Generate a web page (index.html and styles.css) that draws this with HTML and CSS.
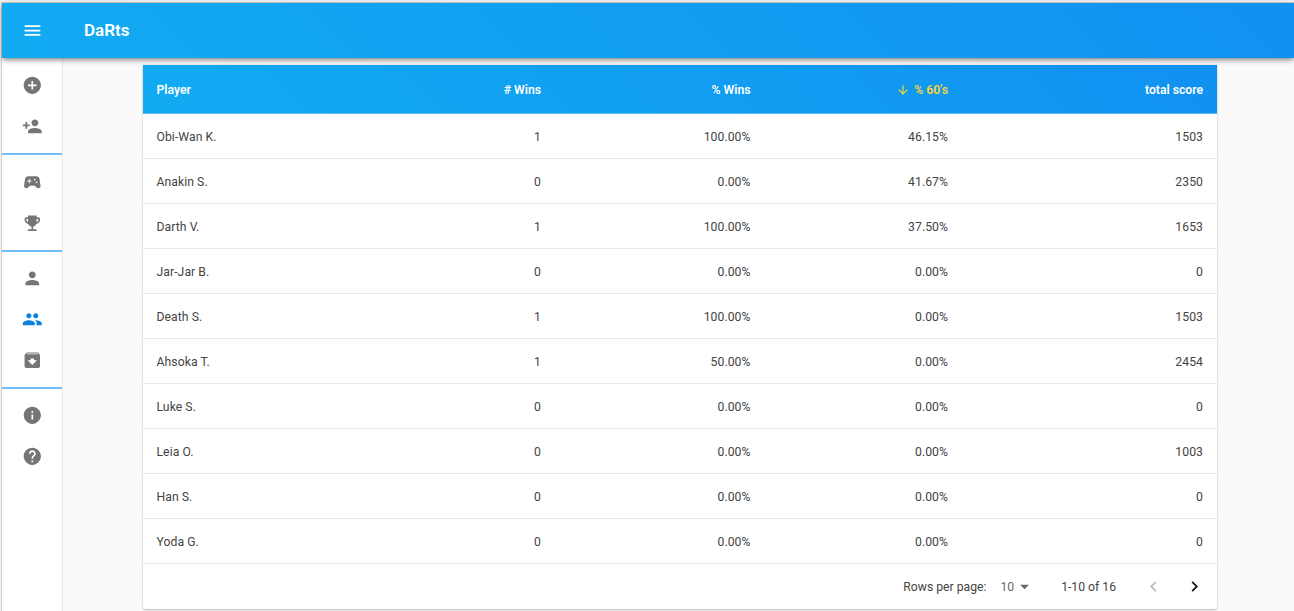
FILE: index.html
```
<!DOCTYPE html>
<html lang="en">
<head>
<meta charset="utf-8">
<title>DaRts</title>
<link rel="stylesheet" href="styles.css">
</head>
<body>
<div class="app">
  <header class="appbar">
    <svg class="menu-icon" viewBox="0 0 24 24"><path d="M3 18h18v-2H3v2zm0-5h18v-2H3v2zm0-7v2h18V6H3z"/></svg>
    <h1 class="title">DaRts</h1>
  </header>
  <div class="body">
    <nav class="sidebar">
      <div class="group">
        <a class="item"><svg viewBox="0 0 24 24"><path d="M12 2C6.48 2 2 6.48 2 12s4.48 10 10 10 10-4.480 10-10S17.520 2 12 2zm5 11h-4v4h-2v-4H7v-2h4V7h2v4h4v2z"/></svg></a>
        <a class="item"><svg viewBox="0 0 24 24"><path d="M15 12c2.210 0 4-1.790 4-4s-1.790-4-4-4-4 1.790-4 4 1.790 4 4 4zm-9-2V7H4v3H1v2h3v3h2v-3h3v-2H6zm9 4c-2.670 0-8 1.340-8 4v2h16v-2c0-2.660-5.330-4-8-4z"/></svg></a>
      </div>
      <div class="group">
        <a class="item"><svg viewBox="0 0 24 24"><path d="M21.580 16.090l-1.090-7.660C20.210 6.460 18.520 5 16.530 5H7.470C5.480 5 3.790 6.460 3.510 8.430l-1.090 7.660C2.200 17.630 3.390 19 4.940 19c.68 0 1.320-.27 1.800-.75L9 16h6l2.250 2.250c.48.48 1.130.75 1.800.75 1.560 0 2.750-1.370 2.530-2.910zM11 11H9v2H8v-2H6v-1h2V8h1v2h2v1zm4-1c-.55 0-1-.45-1-1s.45-1 1-1 1 .45 1 1-.45 1-1 1zm2 3c-.55 0-1-.45-1-1s.45-1 1-1 1 .45 1 1-.45 1-1 1z"/></svg></a>
        <a class="item"><svg viewBox="0 0 24 24"><path d="M19 5h-2V3H7v2H5c-1.100 0-2 .9-2 2v1c0 2.550 1.920 4.630 4.390 4.940.63 1.500 1.980 2.630 3.610 2.960V19H7v2h10v-2h-4v-3.100c1.630-.33 2.980-1.460 3.610-2.960C19.080 12.630 21 10.550 21 8V7c0-1.100-.9-2-2-2zM5 8V7h2v3.820C5.840 10.400 5 9.300 5 8zm14 0c0 1.300-.84 2.400-2 2.820V7h2v1z"/></svg></a>
      </div>
      <div class="group">
        <a class="item"><svg viewBox="0 0 24 24"><path d="M12 12c2.210 0 4-1.790 4-4s-1.790-4-4-4-4 1.790-4 4 1.790 4 4 4zm0 2c-2.670 0-8 1.340-8 4v2h16v-2c0-2.660-5.330-4-8-4z"/></svg></a>
        <a class="item active"><svg viewBox="0 0 24 24"><path d="M16 11c1.660 0 2.990-1.340 2.990-3S17.660 5 16 5s-3 1.340-3 3 1.340 3 3 3zm-8 0c1.660 0 2.990-1.340 2.990-3S9.660 5 8 5 5 6.340 5 8s1.340 3 3 3zm0 2c-2.330 0-7 1.170-7 3.500V19h14v-2.500c0-2.330-4.670-3.500-7-3.500zm8 0c-.29 0-.62.02-.97.05 1.160.84 1.970 1.970 1.970 3.450V19h6v-2.500c0-2.330-4.670-3.500-7-3.500z"/></svg></a>
        <a class="item"><svg viewBox="0 0 24 24"><path d="M20.540 5.230l-1.390-1.680C18.880 3.210 18.470 3 18 3H6c-.47 0-.88.21-1.160.55L3.460 5.230C3.170 5.570 3 6.020 3 6.500V19c0 1.100.9 2 2 2h14c1.100 0 2-.9 2-2V6.500c0-.48-.17-.93-.46-1.270zM12 17.500L6.500 12H10v-2h4v2h3.500L12 17.500zM5.120 5l.81-1h12l.94 1H5.120z"/></svg></a>
      </div>
      <div class="group last">
        <a class="item"><svg viewBox="0 0 24 24"><path d="M12 2C6.480 2 2 6.480 2 12s4.480 10 10 10 10-4.480 10-10S17.520 2 12 2zm1 15h-2v-6h2v6zm0-8h-2V7h2v2z"/></svg></a>
        <a class="item"><svg viewBox="0 0 24 24"><path d="M12 2C6.480 2 2 6.480 2 12s4.480 10 10 10 10-4.480 10-10S17.520 2 12 2zm1 17h-2v-2h2v2zm2.070-7.750l-.9.920C13.450 12.900 13 13.500 13 15h-2v-.5c0-1.100.45-2.100 1.170-2.830l1.240-1.260c.37-.36.59-.86.59-1.410 0-1.100-.9-2-2-2s-2 .9-2 2H8c0-2.210 1.790-4 4-4s4 1.790 4 4c0 .88-.36 1.680-.93 2.250z"/></svg></a>
      </div>
    </nav>
    <main class="content">
      <section class="card">
        <div class="row head"><span>Player</span><span># Wins</span><span>% Wins</span><span class="sorted"><svg viewBox="0 0 24 24"><path d="M20 12l-1.410-1.410L13 16.170V4h-2v12.170l-5.580-5.590L4 12l8 8 8-8z"/></svg>% 60's</span><span>total score</span></div>
        <div class="row"><span>Obi-Wan K.</span><span>1</span><span>100.00%</span><span>46.15%</span><span>1503</span></div>
        <div class="row"><span>Anakin S.</span><span>0</span><span>0.00%</span><span>41.67%</span><span>2350</span></div>
        <div class="row"><span>Darth V.</span><span>1</span><span>100.00%</span><span>37.50%</span><span>1653</span></div>
        <div class="row"><span>Jar-Jar B.</span><span>0</span><span>0.00%</span><span>0.00%</span><span>0</span></div>
        <div class="row"><span>Death S.</span><span>1</span><span>100.00%</span><span>0.00%</span><span>1503</span></div>
        <div class="row"><span>Ahsoka T.</span><span>1</span><span>50.00%</span><span>0.00%</span><span>2454</span></div>
        <div class="row"><span>Luke S.</span><span>0</span><span>0.00%</span><span>0.00%</span><span>0</span></div>
        <div class="row"><span>Leia O.</span><span>0</span><span>0.00%</span><span>0.00%</span><span>1003</span></div>
        <div class="row"><span>Han S.</span><span>0</span><span>0.00%</span><span>0.00%</span><span>0</span></div>
        <div class="row"><span>Yoda G.</span><span>0</span><span>0.00%</span><span>0.00%</span><span>0</span></div>
        <div class="pager">
          <span class="label">Rows per page:</span>
          <span class="select">10<svg viewBox="0 0 24 24"><path d="M7 10l5 5 5-5z"/></svg></span>
          <span class="range">1-10 of 16</span>
          <svg class="arrow disabled" viewBox="0 0 24 24"><path d="M15.410 7.410L14 6l-6 6 6 6 1.410-1.410L10.830 12z"/></svg>
          <svg class="arrow" viewBox="0 0 24 24"><path d="M10 6L8.590 7.410 13.170 12l-4.580 4.590L10 18l6-6z"/></svg>
        </div>
      </section>
    </main>
  </div>
</div>
</body>
</html>
```
FILE: styles.css
```
* { box-sizing: border-box; }
body {
  margin: 0;
  height: 611px;
  overflow: hidden;
  background: #f1f1f1;
  font-family: Roboto, "Liberation Sans", sans-serif;
  color: #444;
}
svg { display: block; fill: currentColor; flex: none; }
.app {
  margin-left: 1px;
  margin-top: 2px;
  height: 609px;
  display: flex;
  flex-direction: column;
  border-left: 1px solid #cfcfcf;
  border-top: 1px solid #d2cfcd;
  background: #fafafa;
}
.appbar {
  flex: none;
  height: 55px;
  padding-left: 20px;
  display: flex;
  align-items: center;
  color: #fff;
  background: linear-gradient(45deg, #12abf2 0%, #1191f1 100%);
  box-shadow: 0 2px 4px -1px rgba(0,0,0,.3), 0 3px 5px rgba(0,0,0,.16), 0 1px 9px rgba(0,0,0,.12);
  position: relative;
  z-index: 1;
}
.menu-icon { width: 21px; height: 21px; }
.title {
  margin: 0 0 2px 41px;
  font-size: 17px;
  font-weight: 600;
}
.body { flex: 1; display: flex; min-height: 0; }
.sidebar {
  width: 61px;
  flex: none;
  background: #fff;
  border-right: 1px solid #ebebeb;
  color: #757575;
}
.group { padding: 6.5px 0 6px; border-bottom: 2px solid #70bdf8; }
.group:first-child { padding-top: 7px; }
.group.last { padding-top: 6px; border-bottom: 0; }
.item {
  height: 41px;
  display: flex;
  align-items: center;
  justify-content: center;
}
.item svg { width: 20.600px; height: 20.600px; }
.item.active { color: #0b80dc; }
.content { flex: 1; padding: 7px 77px 0 79.500px; }
.card {
  height: 543.500px;
  background: #fff;
  border-radius: 0 0 3px 3px;
  box-shadow: 0 1px 2px rgba(0,0,0,.24), 0 0 2px rgba(0,0,0,.12);
}
.row {
  display: grid;
  grid-template-columns: 203.500px 181px 209.500px 197.500px 1fr;
  align-items: center;
  height: 45.070px;
  padding: 2px 14px 0;
  border-bottom: 1px solid #e8e8e8;
  font-size: 12.200px;
  letter-spacing: .06px;
}
.row span { text-align: right; }
.row span:first-child { text-align: left; }
.row.head {
  height: 48.500px;
  padding-top: 1.500px;
  letter-spacing: 0;
  color: #fff;
  font-weight: 600;
  border-bottom-color: #5fb8f1;
  background: linear-gradient(45deg, #12abf2 0%, #1191f1 100%);
}
.row .sorted {
  display: flex;
  align-items: center;
  justify-content: flex-end;
  color: #f7d531;
}
.sorted svg { width: 14px; height: 14px; margin-right: 4px; }
.pager {
  height: 45.500px;
  display: flex;
  align-items: center;
  justify-content: flex-end;
  padding-right: 12px;
  font-size: 12.200px;
  letter-spacing: 0;
}
.select { display: flex; align-items: center; margin-left: 14px; color: #686868; }
.select svg { width: 21px; height: 21px; }
.range { margin-left: 26px; }
.arrow { width: 21px; height: 21px; margin-left: 20px; color: #111; }
.arrow.disabled { margin-left: 27px; color: #b9b9b9; }
```
